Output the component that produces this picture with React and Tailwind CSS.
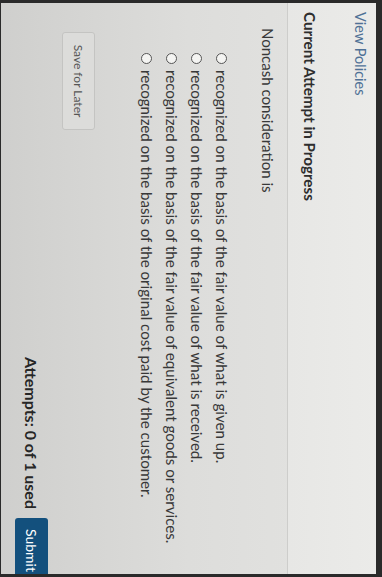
import React from "react";

function Radio() {
  return (
    <span className="inline-block w-[11px] h-[11px] rounded-full border-[1.5px] border-[#555] bg-[#f4f4f2] shrink-0" />
  );
}

const options = [
  "recognized on the basis of the fair value of what is given up.",
  "recognized on the basis of the fair value of what is received.",
  "recognized on the basis of the fair value of equivalent goods or services.",
  "recognized on the basis of the original cost paid by the customer.",
];

export default function App() {
  return (
    <div className="w-[382px] h-[577px] overflow-hidden bg-[#2a2a2a]">
      <div
        className="w-[577px] h-[382px] origin-top-left rotate-90 translate-x-[382px] flex flex-col pt-[6px] pl-[3px] pr-[3px] pb-[1px] text-[#383838]"
        style={{ fontFamily: "Lato, 'Open Sans', sans-serif" }}
      >
        <div className="flex-1 flex flex-col bg-[#dcdcda] bg-gradient-to-b from-[#e4e4e2] via-[#dddddb] to-[#cfcfcd]">
          <div className="h-[89px] shrink-0 bg-gradient-to-b from-[#ebebe9] to-[#e7e7e5] border-b border-[#cdcdcb] pl-[9px] pt-[6px] flex flex-col">
            <div className="text-[14.5px] leading-[20px] text-[#4f7196]">View Policies</div>
            <div className="mt-[30px] text-[15.2px] leading-[20px] font-bold text-[#2e2e2e]">
              Current Attempt in Progress
            </div>
          </div>
          <div className="pl-[25px] pt-[9px] flex flex-col">
            <div className="text-[15px] leading-[20px]">Noncash consideration is</div>
            <div className="mt-[26px] pl-[25px] flex flex-col gap-[5px]">
              {options.map((o) => (
                <div key={o} className="flex items-center gap-[6px] h-[20px] text-[15.1px] leading-[20px]">
                  <Radio />
                  <span>{o}</span>
                </div>
              ))}
            </div>
          </div>
          <div className="flex-1 flex flex-col justify-end pb-[14px]">
            <div className="pl-[29px]">
              <div className="w-[98px] h-[33px] rounded-[3px] border border-[#c4c4c2] bg-[#dcdcda] flex items-center justify-center text-[12px] text-[#555]">
                Save for Later
              </div>
            </div>
            <div className="mt-[14px] flex items-center justify-end gap-[9px]">
              <span className="text-[16px] font-bold text-[#262626]">Attempts: 0 of 1 used</span>
              <div className="w-[56px] h-[33px] rounded-l-[3px] bg-[#13507d] text-white text-[14px] flex items-center pl-[11px]">
                Submit
              </div>
            </div>
          </div>
        </div>
      </div>
    </div>
  );
}
